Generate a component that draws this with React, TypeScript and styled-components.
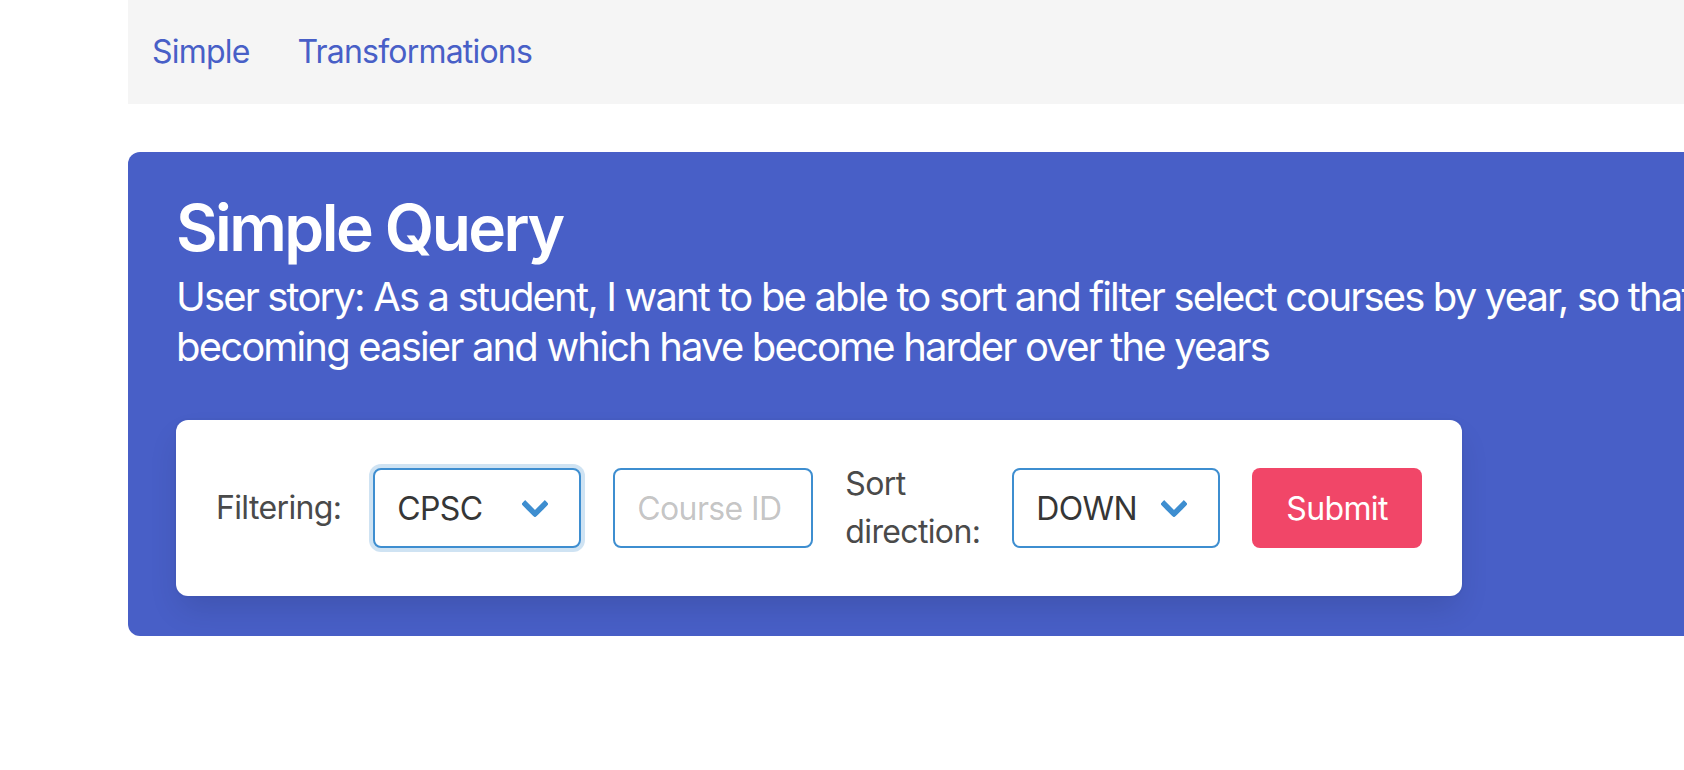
import styled, { createGlobalStyle } from "styled-components";

const GlobalStyle = createGlobalStyle`
  html, body {
    margin: 0;
    padding: 0;
    overflow: hidden;
    background: #fff;
  }
  body {
    font-family: Inter, "Noto Sans", sans-serif;
  }
  *, *::before, *::after {
    box-sizing: border-box;
  }
`;

const Page = styled.div`
  width: 2400px;
  padding-left: 128px;
`;

const Navbar = styled.nav`
  display: flex;
  align-items: stretch;
  height: 104px;
  background: #f5f5f5;
`;

const NavItem = styled.a`
  display: flex;
  align-items: center;
  padding: 0 24px;
  font-size: 32px;
  line-height: 1.5;
  letter-spacing: -0.025em;
  color: #485fc7;
  text-decoration: none;
  cursor: pointer;
`;

const Hero = styled.section`
  margin-top: 48px;
  background: #485fc7;
  border-radius: 12px;
  padding: 40px 48px;
`;

const Title = styled.h1`
  margin: 0 0 8px;
  font-size: 64px;
  font-weight: 600;
  line-height: 72px;
  letter-spacing: -0.04em;
  color: #fff;
`;

const Subtitle = styled.p`
  margin: 0 0 48px;
  font-size: 40px;
  line-height: 50px;
  font-weight: 400;
  letter-spacing: -0.046em;
  white-space: nowrap;
  color: #fff;
`;

const Box = styled.form`
  display: flex;
  align-items: center;
  gap: 32px;
  width: fit-content;
  padding: 40px;
  background: #fff;
  border-radius: 12px;
  box-shadow: 0 16px 32px -4px rgba(10, 10, 10, 0.12),
    0 0 0 2px rgba(10, 10, 10, 0.02);
`;

const Label = styled.label<{ $narrow?: boolean }>`
  font-size: 32px;
  line-height: 48px;
  letter-spacing: -0.02em;
  color: #4a4a4a;
  ${({ $narrow }) => $narrow && "width: min-content;"}
`;

const SelectWrap = styled.div`
  position: relative;

  &::after {
    content: "";
    position: absolute;
    right: 36px;
    top: 50%;
    margin-top: -14px;
    width: 20px;
    height: 20px;
    border: 6px solid #3e8ed0;
    border-top: 0;
    border-right: 0;
    border-radius: 3px;
    transform: rotate(-45deg);
    pointer-events: none;
  }
`;

const Select = styled.select<{ $focused?: boolean }>`
  appearance: none;
  display: block;
  width: 208px;
  height: 80px;
  padding: 0 80px 0 22px;
  border: 2px solid #3e8ed0;
  border-radius: 8px;
  background: #fff;
  font-family: inherit;
  font-size: 32px;
  letter-spacing: -0.02em;
  color: #363636;
  outline: none;
  box-shadow: ${({ $focused }) =>
    $focused ? "0 0 0 4px rgba(62, 142, 208, 0.25)" : "none"};
`;

const Input = styled.input`
  width: 200px;
  height: 80px;
  padding: 0 22px;
  border: 2px solid #3e8ed0;
  border-radius: 8px;
  font-family: inherit;
  font-size: 32px;
  letter-spacing: -0.02em;
  color: #363636;
  outline: none;

  &::placeholder {
    color: rgba(54, 54, 54, 0.3);
  }
`;

const Button = styled.button`
  height: 80px;
  padding: 0 32px;
  border: 2px solid transparent;
  border-radius: 8px;
  background: #f14668;
  color: #fff;
  font-family: inherit;
  font-size: 32px;
  letter-spacing: -0.02em;
  cursor: pointer;
`;

export default function App() {
  return (
    <>
      <GlobalStyle />
      <Page>
        <Navbar>
          <NavItem>Simple</NavItem>
          <NavItem>Transformations</NavItem>
        </Navbar>
        <Hero>
          <Title>Simple Query</Title>
          <Subtitle>
            User story: As a student, I want to be able to sort and filter
            select courses by year, so that I can see which courses are
            <br />
            becoming easier and which have become harder over the years
          </Subtitle>
          <Box onSubmit={(e) => e.preventDefault()}>
            <Label>Filtering:</Label>
            <SelectWrap>
              <Select $focused defaultValue="CPSC">
                <option>CPSC</option>
                <option>MATH</option>
                <option>PHYS</option>
              </Select>
            </SelectWrap>
            <Input placeholder="Course ID" />
            <Label $narrow>Sort direction:</Label>
            <SelectWrap>
              <Select defaultValue="DOWN">
                <option>DOWN</option>
                <option>UP</option>
              </Select>
            </SelectWrap>
            <Button type="submit">Submit</Button>
          </Box>
        </Hero>
      </Page>
    </>
  );
}
